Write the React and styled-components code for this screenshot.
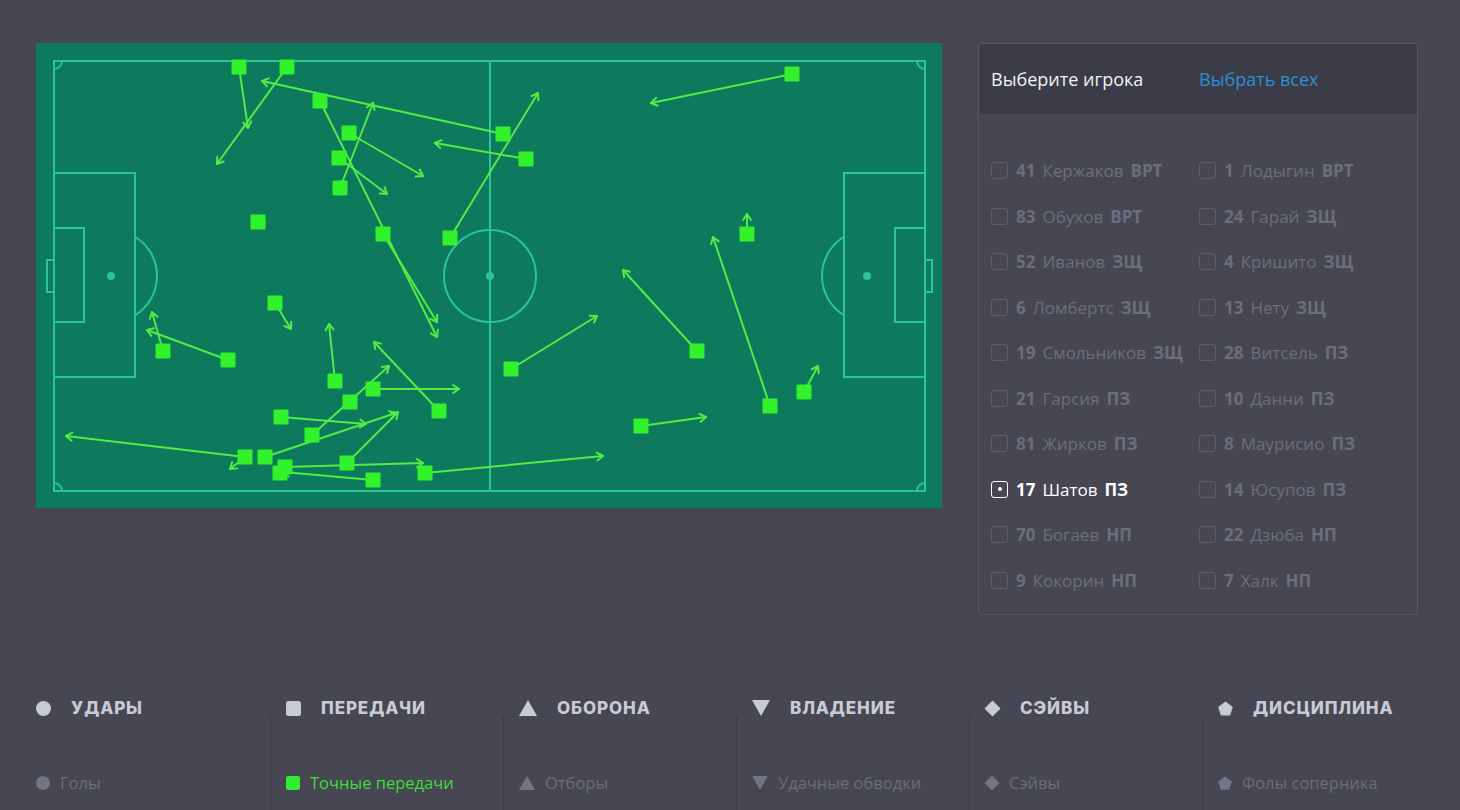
import React from "react";
import styled, { createGlobalStyle } from "styled-components";

const Global = createGlobalStyle`
  html, body { margin: 0; padding: 0; background: #464753; overflow: hidden; }
  body { font-family: "Open Sans", "Noto Sans", sans-serif; }
`;

const Page = styled.div`
  width: 1460px;
  height: 810px;
  background: #464753;
  overflow: hidden;
`;

const Top = styled.div`
  display: flex;
  gap: 36px;
  padding: 43px 0 0 36px;
`;

const FieldSvg = styled.svg`
  display: block;
  flex: none;
`;

const Panel = styled.div`
  width: 438px;
  height: 570px;
  border: 1px solid #575865;
  border-radius: 4px;
  display: flex;
  flex-direction: column;
`;

const PanelHead = styled.div`
  height: 70px;
  background: #3b3c47;
  border-radius: 4px 4px 0 0;
  display: grid;
  grid-template-columns: 208px 1fr;
  align-items: center;
  padding: 0 12px;
  font-size: 18px;
`;

const Title = styled.span`
  color: #f2f2f4;
`;

const SelectAll = styled.span`
  color: #2d8fd6;
`;

const PlayerGrid = styled.div`
  display: grid;
  grid-template-columns: 208px 1fr;
  grid-auto-rows: 45.5px;
  padding: 34px 12px 0;
`;

const Player = styled.div`
  display: flex;
  align-items: center;
  gap: 8px;
  font-size: 17px;
  color: ${(p) => (p.$active ? "#ffffff" : "#6c6e7a")};
  white-space: nowrap;
`;

const Box = styled.span`
  width: 17px;
  height: 17px;
  box-sizing: border-box;
  border: 1.5px solid ${(p) => (p.$active ? "#ffffff" : "#5c5e6b")};
  border-radius: 3px;
  display: flex;
  align-items: center;
  justify-content: center;
  flex: none;
  &::after {
    content: "";
    display: ${(p) => (p.$active ? "block" : "none")};
    width: 4px;
    height: 4px;
    border-radius: 50%;
    background: #fff;
  }
`;

const Num = styled.b`
  font-weight: 700;
  margin-right: 7px;
`;

const Pos = styled.b`
  font-weight: 700;
  margin-left: 7px;
`;

const Tabs = styled.div`
  display: grid;
  grid-template-columns: 234px repeat(5, 233px);
  padding-left: 36px;
  margin-top: 86px;
`;

const Col = styled.div`
  display: flex;
  flex-direction: column;
`;

const Heading = styled.div`
  display: flex;
  align-items: center;
  gap: 20px;
  height: 14px;
  padding-left: ${(p) => (p.$first ? "0" : "16px")};
  font-family: "Inter", "DejaVu Sans", sans-serif;
  font-weight: 800;
  font-size: 17px;
  letter-spacing: 0.9px;
  color: #c9cbd4;
  text-transform: uppercase;
`;

const Body = styled.div`
  margin-top: 1px;
  height: 120px;
  border-left: ${(p) => (p.$first ? "none" : "1px solid #3a3b46")};
  padding: 55px 0 0 ${(p) => (p.$first ? "0" : "15px")};
`;

const Item = styled.div`
  display: flex;
  align-items: center;
  gap: 10px;
  font-size: 16.5px;
  color: ${(p) => (p.$active ? "#3fdc3a" : "#6b6d79")};
`;

function Shape({ kind, size, color }) {
  const s = size;
  let el;
  if (kind === "circle") el = <circle cx={s / 2} cy={s / 2} r={s / 2} fill={color} />;
  else if (kind === "square") el = <rect x="0" y="0" width={s} height={s} rx="2.5" fill={color} />;
  else if (kind === "up") el = <polygon points={`${s / 2},1 ${s},${s - 1} 0,${s - 1}`} fill={color} />;
  else if (kind === "down") el = <polygon points={`0,1 ${s},1 ${s / 2},${s - 1}`} fill={color} />;
  else if (kind === "diamond")
    el = (
      <polygon
        points={`${s / 2},0.5 ${s - 0.5},${s / 2} ${s / 2},${s - 0.5} 0.5,${s / 2}`}
        fill={color}
        stroke={color}
        strokeWidth="1.5"
        strokeLinejoin="round"
      />
    );
  else {
    const pts = [];
    for (let i = 0; i < 5; i++) {
      const a = -Math.PI / 2 + (i * 2 * Math.PI) / 5;
      pts.push(`${s / 2 + (s / 2 - 0.5) * Math.cos(a)},${s / 2 + 0.8 + (s / 2 - 0.5) * Math.sin(a)}`);
    }
    el = <polygon points={pts.join(" ")} fill={color} stroke={color} strokeWidth="1.2" strokeLinejoin="round" />;
  }
  return (
    <svg width={s} height={s} viewBox={`0 0 ${s} ${s}`} style={{ flex: "none", overflow: "visible" }}>
      {el}
    </svg>
  );
}

const players = [
  ["41", "Кержаков", "ВРТ"], ["1", "Лодыгин", "ВРТ"],
  ["83", "Обухов", "ВРТ"], ["24", "Гарай", "ЗЩ"],
  ["52", "Иванов", "ЗЩ"], ["4", "Кришито", "ЗЩ"],
  ["6", "Ломбертс", "ЗЩ"], ["13", "Нету", "ЗЩ"],
  ["19", "Смольников", "ЗЩ"], ["28", "Витсель", "ПЗ"],
  ["21", "Гарсия", "ПЗ"], ["10", "Данни", "ПЗ"],
  ["81", "Жирков", "ПЗ"], ["8", "Маурисио", "ПЗ"],
  ["17", "Шатов", "ПЗ", true], ["14", "Юсупов", "ПЗ"],
  ["70", "Богаев", "НП"], ["22", "Дзюба", "НП"],
  ["9", "Кокорин", "НП"], ["7", "Халк", "НП"],
];

const tabs = [
  ["circle", "Удары", "Голы"],
  ["square", "Передачи", "Точные передачи", true],
  ["up", "Оборона", "Отборы"],
  ["down", "Владение", "Удачные обводки"],
  ["diamond", "Сэйвы", "Сэйвы"],
  ["pent", "Дисциплина", "Фолы соперника"],
];

const passes = [
  [239, 67, 248, 128],
  [287, 67, 217, 164],
  [503, 134, 262, 81],
  [320, 101, 437, 337],
  [383, 234, 437, 322],
  [349, 133, 423, 176],
  [339, 158, 387, 194],
  [340, 188, 373, 103],
  [526, 159, 435, 143],
  [450, 238, 538, 93],
  [258, 222, 265, 222],
  [792, 74, 651, 103],
  [747, 234, 747, 214],
  [275, 303, 291, 329],
  [228, 360, 147, 330],
  [163, 351, 152, 312],
  [335, 381, 329, 324],
  [373, 389, 459, 389],
  [439, 411, 374, 342],
  [312, 435, 389, 366],
  [281, 417, 366, 424],
  [265, 457, 396, 413],
  [347, 463, 398, 412],
  [245, 457, 66, 436],
  [245, 457, 230, 469],
  [285, 467, 423, 463],
  [373, 480, 283, 472],
  [425, 473, 603, 456],
  [511, 369, 597, 316],
  [697, 351, 623, 270],
  [770, 406, 713, 237],
  [641, 426, 706, 417],
  [804, 392, 818, 366],
];

const squares = [
  [239, 67], [287, 67], [320, 101], [349, 133], [339, 158], [340, 188], [503, 134], [526, 159],
  [258, 222], [383, 234], [450, 238], [275, 303], [163, 351], [228, 360], [335, 381], [373, 389],
  [350, 402], [439, 411], [281, 417], [312, 435], [245, 457], [265, 457], [285, 467], [280, 473],
  [347, 463], [373, 480], [425, 473],
  [792, 74], [747, 234], [511, 369], [697, 351], [770, 406], [641, 426], [804, 392],
];

function Arrow({ p }) {
  const [x1, y1, x2, y2] = p;
  const dx = x2 - x1, dy = y2 - y1;
  const len = Math.hypot(dx, dy) || 1;
  const ux = dx / len, uy = dy / len;
  const px = -uy, py = ux;
  const h = 6, w = 4;
  const a = `${x2 - ux * h + px * w},${y2 - uy * h + py * w}`;
  const b = `${x2 - ux * h - px * w},${y2 - uy * h - py * w}`;
  return (
    <g>
      <line x1={x1} y1={y1} x2={x2} y2={y2} />
      <polyline points={`${a} ${x2},${y2} ${b}`} fill="none" />
    </g>
  );
}

function Field() {
  const L = "#2bc497";
  const arc = 46;
  const dy = Math.sqrt(arc * arc - 24 * 24);
  return (
    <FieldSvg width="906" height="465" viewBox="36 43 906 465">
      <rect x="36" y="43" width="906" height="465" fill="#0d7a5e" />
      <g stroke={L} strokeWidth="2" fill="none">
        <rect x="54" y="61" width="871" height="430" />
        <line x1="490" y1="61" x2="490" y2="491" />
        <circle cx="490" cy="276" r="46" />
        <rect x="54" y="173" width="81" height="204" />
        <rect x="54" y="228" width="30" height="94" />
        <rect x="47" y="260" width="7" height="32" />
        <path d={`M135,${276 - dy} A46,46 0 0 1 135,${276 + dy}`} />
        <rect x="844" y="173" width="81" height="204" />
        <rect x="895" y="228" width="30" height="94" />
        <rect x="925" y="260" width="7" height="32" />
        <path d={`M844,${276 - dy} A46,46 0 0 0 844,${276 + dy}`} />
        <path d="M62,61 A8,8 0 0 1 54,69" />
        <path d="M54,483 A8,8 0 0 1 62,491" />
        <path d="M917,61 A8,8 0 0 0 925,69" />
        <path d="M925,483 A8,8 0 0 0 917,491" />
      </g>
      <g fill={L}>
        <circle cx="490" cy="276" r="4" />
        <circle cx="111" cy="276" r="4" />
        <circle cx="867" cy="276" r="4" />
      </g>
      <g stroke="#52ec44" strokeWidth="2" strokeLinecap="round" strokeLinejoin="round">
        {passes.map((p, i) => (
          <Arrow key={i} p={p} />
        ))}
      </g>
      <g fill="#33f22b">
        {squares.map(([x, y], i) => (
          <rect key={i} x={x - 7.5} y={y - 7.5} width="15" height="15" rx="1" />
        ))}
      </g>
    </FieldSvg>
  );
}

export default function App() {
  return (
    <Page>
      <Global />
      <Top>
        <Field />
        <Panel>
          <PanelHead>
            <Title>Выберите игрока</Title>
            <SelectAll>Выбрать всех</SelectAll>
          </PanelHead>
          <PlayerGrid>
            {players.map(([n, name, pos, active]) => (
              <Player key={n} $active={active}>
                <Box $active={active} />
                <span>
                  <Num>{n}</Num>
                  {name}
                  <Pos>{pos}</Pos>
                </span>
              </Player>
            ))}
          </PlayerGrid>
        </Panel>
      </Top>
      <Tabs>
        {tabs.map(([kind, head, sub, active], i) => (
          <Col key={head}>
            <Heading $first={i === 0}>
              <Shape kind={kind} size={kind === "up" || kind === "down" ? 18 : 15} color="#c9cbd4" />
              <span>{head}</span>
            </Heading>
            <Body $first={i === 0}>
              <Item $active={active}>
                <Shape
                  kind={kind}
                  size={kind === "up" || kind === "down" ? 16 : 14}
                  color={active ? "#33ee2c" : "#737582"}
                />
                <span>{sub}</span>
              </Item>
            </Body>
          </Col>
        ))}
      </Tabs>
    </Page>
  );
}
